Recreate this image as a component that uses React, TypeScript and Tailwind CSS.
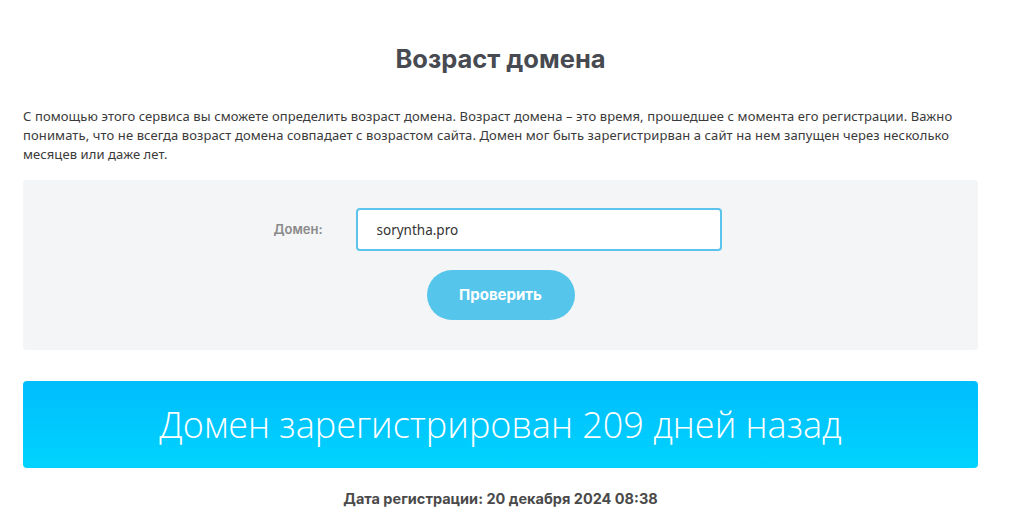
import React, { useState } from 'react';

export default function DomainAgePage() {
  const [domain, setDomain] = useState('soryntha.pro');

  return (
    <div className="min-h-screen bg-white font-['Inter','Noto_Sans',sans-serif] text-[#444]">
      <div className="ml-[23px] w-[955px] pt-[42px]">
        <h1 className="text-center text-[25.5px] font-bold leading-[34px] text-[#474a50]">
          Возраст домена
        </h1>

        <p className="mt-[31px] font-['Noto_Sans',sans-serif] text-[13px] leading-[19px] tracking-[0.1px] text-[#3a3a3a]">
          С помощью этого сервиса вы сможете определить возраст домена. Возраст домена – это время,
          прошедшее с момента его регистрации. Важно понимать, что не всегда возраст домена совпадает
          с возрастом сайта. Домен мог быть зарегистрирван а сайт на нем запущен через несколько
          месяцев или даже лет.
        </p>

        <div className="mt-[16px] flex h-[170px] flex-col items-center rounded-[4px] bg-[#f3f5f6] pt-[28px]">
          <div className="flex items-center pr-[6px]">
            <label className="w-[50px] text-[13px] font-semibold text-[#8a8a8a]">Домен:</label>
            <input
              value={domain}
              onChange={(e) => setDomain(e.target.value)}
              className="ml-[32px] h-[43px] w-[366px] rounded-[4px] border-2 border-[#5cc3ec] bg-white px-[19px] font-['Noto_Sans',sans-serif] text-[13.5px] text-[#333] outline-none"
            />
          </div>
          <button className="mt-[19px] h-[50px] w-[148px] rounded-full bg-[#56c5ec] text-[15px] font-bold text-white">
            Проверить
          </button>
        </div>

        <div className="mt-[31px] flex h-[87px] items-center justify-center rounded-[4px] bg-gradient-to-b from-[#00bdfd] to-[#00d3fd]">
          <span className="font-['Open_Sans',sans-serif] text-[36px] font-light text-white">
            Домен зарегистрирован 209 дней назад
          </span>
        </div>

        <div className="mt-[21px] text-center text-[14.5px] font-bold leading-[20px] text-[#4a4a4a]">
          Дата регистрации: 20 декабря 2024 08:38
        </div>
      </div>
    </div>
  );
}
